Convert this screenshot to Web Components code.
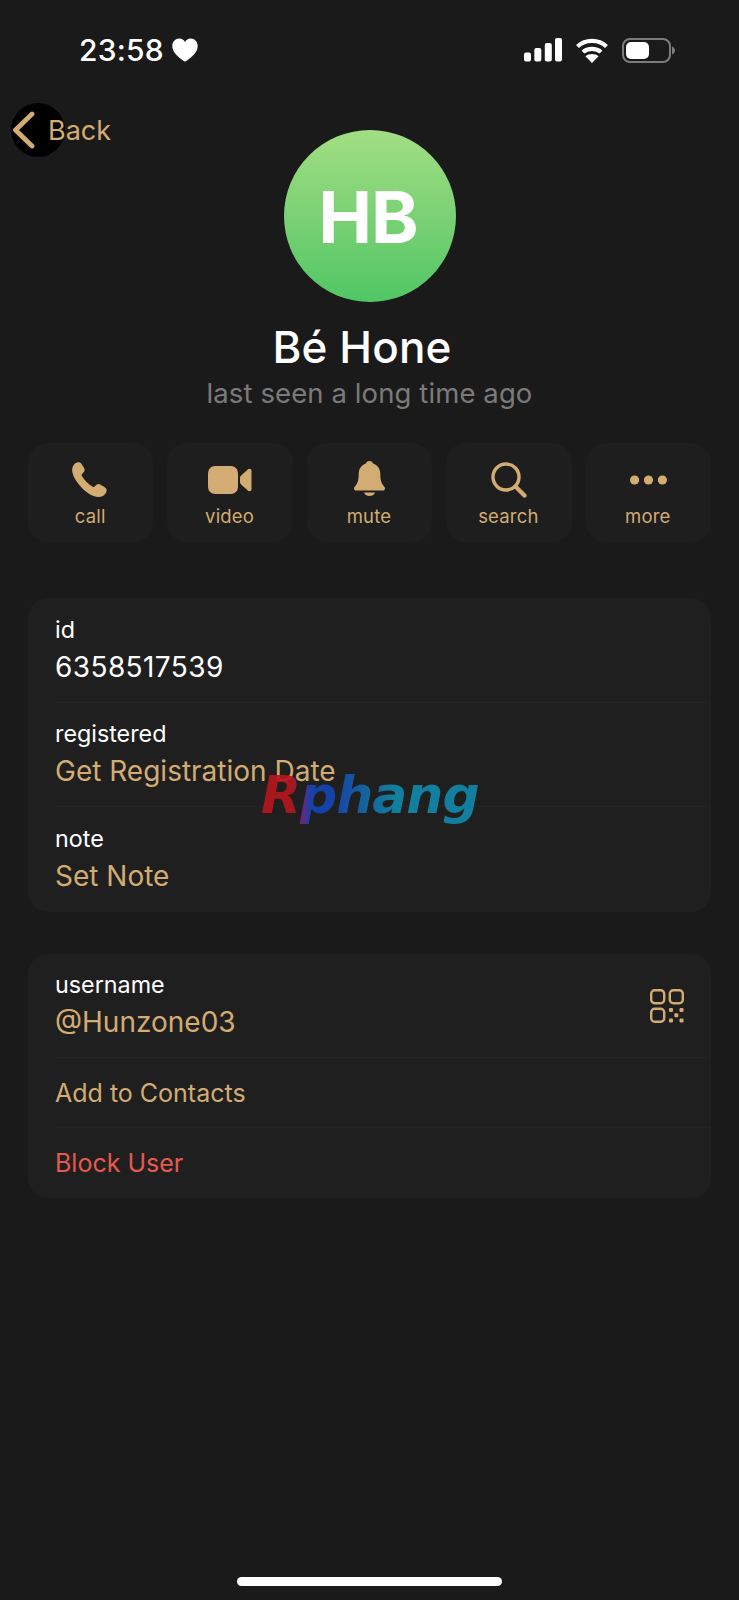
<!DOCTYPE html>
<html lang="en">
<head>
<meta charset="utf-8">
<title>Profile</title>
<style>
  html, body { margin: 0; padding: 0; background: #1a1a1a; }
  body { width: 739px; height: 1600px; overflow: hidden; font-family: Inter, "Noto Sans", sans-serif; color: #fff; }
</style>
</head>
<body>
<profile-page>
  <status-bar slot="status" time="23:58"></status-bar>
  <back-button slot="back">Back</back-button>
  <profile-avatar slot="avatar">HB</profile-avatar>
  <span slot="name">Bé Hone</span>
  <span slot="seen">last seen a long time ago</span>

  <action-button slot="actions" label="call">
    <svg style="margin-right:2px" width="36" height="36" viewBox="0 0 36 36"><path fill="#d2ac72" d="M2.500 2C4.800 -.2 8 -.3 9.400 1.800l2.500 3.900c1.100 1.700.9 3.300-.3 4.600l-1.500 1.700c-.6.700-.6 1.300-.2 2 1.100 2 2.700 4.100 4.700 6.100 2 2 4.100 3.600 6.100 4.700.7.400 1.300.3 1.900-.3l1.400-1.300c1.300-1.200 3-1.500 4.600-.5l4.200 2.500c2.300 1.400 2.400 4.300.5 6.600-1.700 2.200-4.200 3.300-7 3.200-5.200-.3-10.800-3.500-16.100-8.800C4.900 20.600 1.200 15.100.3 9.900-.2 6.900.6 4 2.500 2z"/></svg>
  </action-button>
  <action-button slot="actions" label="video">
    <svg width="44" height="28" viewBox="0 0 44 28"><rect x="0" y="0" width="30" height="28" rx="7" fill="#d2ac72"/><path fill="#d2ac72" d="M32 12c0-1 .4-1.800 1.100-2.400l7-6.300c1.300-1.100 3.400-.3 3.400 1.500v18.400c0 1.800-2.100 2.600-3.400 1.500l-7-6.300c-.7-.6-1.100-1.400-1.100-2.400z"/></svg>
  </action-button>
  <action-button slot="actions" label="mute">
    <svg style="margin-top:-3px" width="31" height="35" viewBox="0 0 31 35"><path fill="#d2ac72" d="M15.500 0c2 0 3.300 1.200 3.800 2.800 4.500 1.200 7 5.200 7 10.200 0 5 .8 8.500 2.600 11 1 1.400 2.100 2.300 2.100 3.400 0 1-.9 2.100-2 2.100H2c-1.100 0-2-1.100-2-2.100 0-1.100 1.100-2 2.100-3.400 1.800-2.500 2.600-6 2.600-11 0-5 2.500-9 7-10.200C12.200 1.200 13.500 0 15.500 0z"/><path fill="#d2ac72" d="M10 31.500h11c-.5 2-2.800 3.500-5.500 3.500s-5-1.500-5.500-3.500z"/></svg>
  </action-button>
  <action-button slot="actions" label="search">
    <svg width="36" height="36" viewBox="0 0 36 36"><circle cx="15" cy="15" r="13" fill="none" stroke="#d2ac72" stroke-width="3.400"/><path d="M24.500 24.500l9 9" fill="none" stroke="#d2ac72" stroke-width="4.200" stroke-linecap="round"/></svg>
  </action-button>
  <action-button slot="actions" label="more">
    <svg width="37" height="10" viewBox="0 0 37 10"><circle cx="4.600" cy="5" r="4.600" fill="#d2ac72"/><circle cx="18.500" cy="5" r="4.600" fill="#d2ac72"/><circle cx="32.400" cy="5" r="4.600" fill="#d2ac72"/></svg>
  </action-button>

  <info-card slot="cards">
    <info-row label="id" value="6358517539" plain></info-row>
    <info-row label="registered" value="Get Registration Date"></info-row>
    <info-row label="note" value="Set Note" last></info-row>
  </info-card>
  <info-card slot="cards">
    <info-row label="username" value="@Hunzone03">
      <svg slot="aside" width="34" height="34" viewBox="0 0 34 34" fill="none" stroke="#d2ac72" stroke-width="2.400"><rect x="1.200" y="1.200" width="13" height="13" rx="3.500"/><rect x="19.800" y="1.200" width="13" height="13" rx="3.500"/><rect x="1.200" y="19.800" width="13" height="13" rx="3.500"/><g fill="#d2ac72" stroke="none"><rect x="19" y="19" width="4" height="4" rx="1"/><rect x="29.500" y="19" width="4" height="4" rx="1"/><rect x="24.300" y="24.300" width="4" height="4" rx="1"/><rect x="19" y="29.500" width="4" height="4" rx="1"/><rect x="29.500" y="29.500" width="4" height="4" rx="1"/></g></svg>
    </info-row>
    <link-row>Add to Contacts</link-row>
    <link-row danger last>Block User</link-row>
  </info-card>

  <water-mark slot="overlay">Rphang</water-mark>
  <home-indicator slot="home"></home-indicator>
</profile-page>

<script>
  function define(name, css, html) {
    class El extends HTMLElement {
      constructor() {
        super();
        this.attachShadow({ mode: 'open' });
        this.shadowRoot.innerHTML = '<style>' + css + '</style>' + html(this);
      }
    }
    customElements.define(name, El);
  }

  define('profile-page', `
    :host { display: block; position: relative; width: 739px; height: 1600px; box-sizing: border-box; padding: 0 28px; }
    .top { display: grid; grid-template-columns: 1fr 172px 1fr; margin: 0 -28px; height: 202px; align-items: end; }
    .top > div { align-self: start; }
    .name { margin-top: 19px; padding-right: 15px; text-align: center; font-size: 44px; line-height: 52px; font-weight: 500; letter-spacing: 0.1px; }
    .seen { margin-top: 2px; text-align: center; font-size: 27.5px; line-height: 36px; color: #7a7a7a; font-weight: 400; letter-spacing: 0.1px; }
    .actions { display: grid; grid-template-columns: repeat(5, 1fr); gap: 14px; margin-top: 32px; }
    .cards { display: flex; flex-direction: column; gap: 42px; margin-top: 56px; }
    .home { position: absolute; left: 0; right: 0; bottom: 0; }
  `, () => `
    <slot name="status"></slot>
    <div class="top"><div><slot name="back"></slot></div><slot name="avatar"></slot><div></div></div>
    <div class="name"><slot name="name"></slot></div>
    <div class="seen"><slot name="seen"></slot></div>
    <div class="actions"><slot name="actions"></slot></div>
    <div class="cards"><slot name="cards"></slot></div>
    <slot name="overlay"></slot>
    <div class="home"><slot name="home"></slot></div>
  `);

  define('status-bar', `
    :host { display: flex; align-items: center; justify-content: space-between; height: 100px; margin: 0 -28px; padding: 0 64px 0 79px; box-sizing: border-box; color: #fff; }
    .left { display: flex; align-items: center; gap: 8px; }
    .time { font-size: 30px; line-height: 100px; font-weight: 500; letter-spacing: 0.2px; }
    .right { display: flex; align-items: center; gap: 13px; }
    svg { display: block; }
  `, el => `
    <div class="left"><span class="time">${el.getAttribute('time')}</span>
      <svg width="26" height="24" viewBox="0 0 26 24"><path fill="#fff" d="M13 23.500C12.500 23.500 11.800 23.100 11 22.500 4.500 17.800.3 13.200.3 8.200.3 3.700 3.300.5 7.300.5c2.500 0 4.500 1.300 5.700 3.400C14.200 1.800 16.200.5 18.700.5c4 0 7 3.200 7 7.700 0 5-4.200 9.600-10.700 14.300-.8.600-1.500 1-2 1z"/></svg>
    </div>
    <div class="right">
      <svg width="38" height="24" viewBox="0 0 38 24"><rect x="0" y="14.500" width="7" height="9" rx="2" fill="#fff"/><rect x="10.300" y="10" width="7" height="13.500" rx="2" fill="#fff"/><rect x="20.800" y="5" width="7" height="18.500" rx="2" fill="#fff"/><rect x="31" y="0" width="7" height="23.500" rx="2" fill="#fff"/></svg>
      <svg width="34" height="25" viewBox="0 0 34 25" fill="none" stroke="#fff" stroke-width="4.200"><path d="M2.500 8.500C10.500 1 23.500 1 31.500 8.500"/><path d="M8 14c4.800-4.300 13.200-4.300 18 0"/><path fill="#fff" stroke="none" d="M17 25l-6.600-6.800c3.600-3 9.600-3 13.200 0z"/></svg>
      <svg width="53" height="25" viewBox="0 0 53 25"><rect x="1" y="1" width="47" height="23" rx="7" fill="none" stroke="#7c7c7c" stroke-width="2"/><rect x="4" y="4" width="23" height="17" rx="5" fill="#fff"/><path fill="#7c7c7c" d="M50 8.500c1.700.6 3 2.200 3 4s-1.300 3.400-3 4z"/></svg>
    </div>
  `);

  define('back-button', `
    :host { display: inline-flex; align-items: center; position: relative; margin-left: 11px; height: 54px; margin-top: 3px; font-size: 27px; color: #d2ac72; }
    .disc { width: 54px; height: 54px; border-radius: 50%; background: #000; display: flex; align-items: center; }
    svg { display: block; }
    .label { position: relative; margin-left: -17px; font-weight: 400; }
  `, () => `
    <div class="disc"><svg width="24" height="38" viewBox="0 0 24 38"><path d="M21 3L4.500 19 21 35" fill="none" stroke="#d2ac72" stroke-width="4.800" stroke-linecap="round" stroke-linejoin="round"/></svg></div>
    <span class="label"><slot></slot></span>
  `);

  define('profile-avatar', `
    :host { display: flex; align-items: center; justify-content: center; width: 172px; height: 172px; border-radius: 50%; background: linear-gradient(180deg, #a3de83, #51c665); color: #fff; font-size: 72px; font-weight: 700; letter-spacing: -1px; box-sizing: border-box; padding-right: 3px; }
  `, () => `<slot></slot>`);

  define('action-button', `
    :host { display: flex; flex-direction: column; align-items: center; height: 99px; border-radius: 20px; background: #1e1e1e; color: #d2ac72; font-size: 18.5px; }
    .icon { height: 54px; margin-top: 10px; display: flex; align-items: center; justify-content: center; }
    .label { line-height: 22px; margin-top: -2px; letter-spacing: 0.2px; margin-right: 1px; }
  `, el => `<div class="icon"><slot></slot></div><div class="label">${el.getAttribute('label')}</div>`);

  define('info-card', `
    :host { display: block; border-radius: 20px; background: #1f1f1f; overflow: hidden; }
  `, () => `<slot></slot>`);

  define('info-row', `
    :host { display: flex; align-items: center; justify-content: space-between; height: 104.5px; box-sizing: border-box; padding: 0 27px; }
    :host(:not([last])) { background: linear-gradient(#232323, #232323) no-repeat 27px 100% / calc(100% - 27px) 1px; }
    .label { font-size: 23.3px; line-height: 28px; color: #fff; }
    .value { font-size: 28px; line-height: 36px; color: #d2ac72; margin-top: 5px; }
    :host([plain]) .value { color: #fff; letter-spacing: 0.4px; }
  `, el => `
    <div class="text"><div class="label">${el.getAttribute('label')}</div><div class="value">${el.getAttribute('value')}</div></div>
    <slot name="aside"></slot>
  `);

  define('link-row', `
    :host { display: flex; align-items: center; height: 70px; box-sizing: border-box; padding: 0 27px; font-size: 25px; color: #d2ac72; }
    :host(:not([last])) { background: linear-gradient(#232323, #232323) no-repeat 27px 100% / calc(100% - 27px) 1px; }
    :host([danger]) { color: #e5594f; }
  `, () => `<slot></slot>`);

  define('water-mark', `
    :host { position: absolute; left: 261px; top: 763px; font-family: "DejaVu Sans", sans-serif; font-size: 52px; line-height: 64px; font-weight: 700; font-style: italic; letter-spacing: -1px; opacity: 0.92; background: linear-gradient(90deg, #b5161c 0%, #b5161c 14%, #6a2a8a 19%, #1545b5 23%, #1545b5 33%, #1565a8 46%, #1088a8 62%, #1088a8 100%); -webkit-background-clip: text; background-clip: text; color: transparent; }
  `, () => `<slot></slot>`);

  define('home-indicator', `
    :host { display: block; width: 265px; height: 9px; border-radius: 5px; background: #fff; margin: 0 auto 14px; }
  `, () => ``);
</script>
</body>
</html>
